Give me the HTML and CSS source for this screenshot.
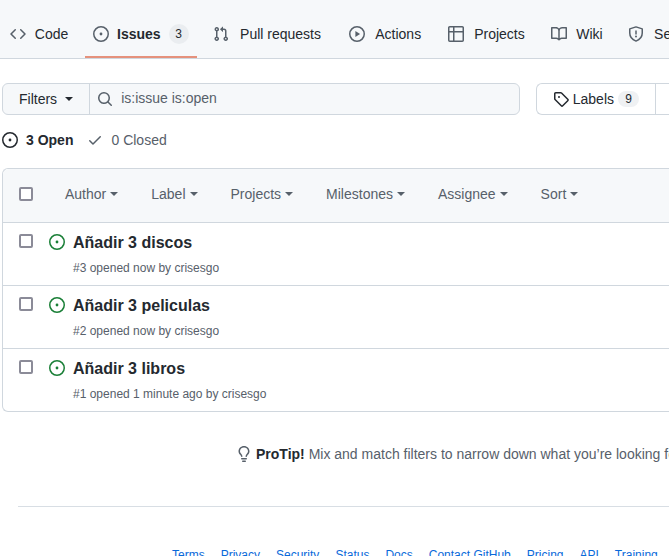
FILE: index.html
```html
<!DOCTYPE html>
<html lang="en">
<head>
<meta charset="utf-8">
<meta name="viewport" content="width=device-width, initial-scale=1">
<title>Issues</title>
<link rel="stylesheet" href="styles.css">
</head>
<body>
<svg class="sprite" aria-hidden="true">
  <symbol id="issue" viewBox="0 0 16 16"><circle cx="8" cy="8" r="7.25" fill="none" stroke="currentColor" stroke-width="1.5"/><circle cx="8" cy="8" r="1.4"/></symbol>
</svg>
<nav class="tabs" aria-label="Repository">
  <a class="tab" href="#"><svg class="icon" viewBox="0 0 16 16"><path d="m11.28 3.22 4.25 4.25a.75.75 0 0 1 0 1.06l-4.25 4.25a.749.749 0 0 1-1.275-.326.749.749 0 0 1 .215-.734L13.94 8l-3.72-3.72a.749.749 0 0 1 .326-1.275.749.749 0 0 1 .734.215Zm-6.56 0a.751.751 0 0 1 1.042.018.751.751 0 0 1 .018 1.042L2.06 8l3.72 3.72a.749.749 0 0 1-.326 1.275.749.749 0 0 1-.734-.215L.47 8.53a.75.75 0 0 1 0-1.06Z"/></svg><span class="tab-text" data-label="Code">Code</span></a>
  <a class="tab selected" href="#" aria-current="page"><svg class="icon"><use href="#issue"/></svg><span class="tab-text" data-label="Issues">Issues</span><span class="counter">3</span></a>
  <a class="tab" href="#"><svg class="icon" viewBox="0 0 16 16"><path d="M1.5 3.25a2.25 2.25 0 1 1 3 2.122v5.256a2.251 2.251 0 1 1-1.5 0V5.372A2.25 2.25 0 0 1 1.5 3.25Zm5.677-.177L9.573.677A.25.25 0 0 1 10 .854V2.5h1A2.5 2.5 0 0 1 13.5 5v5.628a2.251 2.251 0 1 1-1.5 0V5a1 1 0 0 0-1-1h-1v1.646a.25.25 0 0 1-.427.177L7.177 3.427a.25.25 0 0 1 0-.354ZM3.75 2.5a.75.75 0 1 0 0 1.5.75.75 0 0 0 0-1.5Zm0 9.5a.75.75 0 1 0 0 1.5.75.75 0 0 0 0-1.5Zm8.25.75a.75.75 0 1 0 1.5 0 .75.75 0 0 0-1.5 0Z"/></svg><span class="tab-text" data-label="Pull requests">Pull requests</span></a>
  <a class="tab" href="#"><svg class="icon" viewBox="0 0 16 16"><circle cx="8" cy="8" r="7.25" fill="none" stroke="currentColor" stroke-width="1.5"/><path d="M6.4 5.1v5.8l4.7-2.9Z"/></svg><span class="tab-text" data-label="Actions">Actions</span></a>
  <a class="tab" href="#"><svg class="icon" viewBox="0 0 16 16"><path d="M0 1.75C0 .784.784 0 1.75 0h12.5C15.216 0 16 .784 16 1.75v12.5A1.75 1.75 0 0 1 14.25 16H1.75A1.75 1.75 0 0 1 0 14.25ZM6.5 6.5v8h7.75a.25.25 0 0 0 .25-.25V6.5Zm8-1.5V1.75a.25.25 0 0 0-.25-.25H6.5V5Zm-13 1.5v7.75c0 .138.112.25.25.25H5v-8ZM5 5V1.5H1.75a.25.25 0 0 0-.25.25V5Z"/></svg><span class="tab-text" data-label="Projects">Projects</span></a>
  <a class="tab" href="#"><svg class="icon" viewBox="0 0 16 16"><path d="M0 1.75A.75.75 0 0 1 .75 1h4.253c1.227 0 2.317.59 3 1.501A3.743 3.743 0 0 1 11.006 1h4.245a.75.75 0 0 1 .75.75v10.5a.75.75 0 0 1-.75.75h-4.507a2.25 2.25 0 0 0-1.591.659l-.622.621a.75.75 0 0 1-1.06 0l-.622-.621A2.25 2.25 0 0 0 5.258 13H.75a.75.75 0 0 1-.75-.75Zm7.251 10.324.004-5.073-.002-2.253A2.25 2.25 0 0 0 5.003 2.5H1.5v9h3.757a3.75 3.75 0 0 1 1.994.574ZM8.755 4.75l-.004 7.322a3.752 3.752 0 0 1 1.992-.572H14.5v-9h-3.495a2.25 2.25 0 0 0-2.25 2.25Z"/></svg><span class="tab-text" data-label="Wiki">Wiki</span></a>
  <a class="tab" href="#"><svg class="icon" viewBox="0 0 16 16"><path d="M8 .9 14.25 2.9V7c0 3.600-1.900 6.400-6.250 8.100C3.650 13.400 1.750 10.600 1.750 7V2.900Z" fill="none" stroke="currentColor" stroke-width="1.5" stroke-linejoin="round"/><path d="M7.250 4.500h1.500v4h-1.500Z"/><circle cx="8" cy="10.500" r="1"/></svg><span class="tab-text" data-label="Security">Security</span></a>
</nav>
<main class="page">
  <div class="toolbar">
    <form class="search">
      <button class="filters" type="button">Filters<span class="caret"></span></button>
      <label class="query"><svg class="icon" viewBox="0 0 16 16"><path d="M10.680 11.740a6 6 0 0 1-7.922-8.982 6 6 0 0 1 8.982 7.922l3.040 3.040a.749.749 0 0 1-.326 1.275.749.749 0 0 1-.734-.215ZM11.500 7a4.499 4.499 0 1 0-8.997 0A4.499 4.499 0 0 0 11.500 7Z"/></svg><input type="text" aria-label="Search all issues" value="is:issue is:open"></label>
    </form>
    <div class="links">
      <a class="link-button" href="#"><svg class="icon" viewBox="0 0 16 16"><path d="M1 7.775V2.750C1 1.784 1.784 1 2.750 1h5.025c.464 0 .910.184 1.238.513l6.250 6.250a1.750 1.750 0 0 1 0 2.474l-5.026 5.026a1.750 1.750 0 0 1-2.474 0l-6.250-6.250A1.752 1.752 0 0 1 1 7.775Zm1.500 0c0 .066.026.130.073.177l6.250 6.250a.250.250 0 0 0 .354 0l5.025-5.025a.250.250 0 0 0 0-.354l-6.250-6.250a.250.250 0 0 0-.177-.073H2.750a.250.250 0 0 0-.250.250ZM6 5a1 1 0 1 1 0 2 1 1 0 0 1 0-2Z"/></svg>Labels<span class="counter">9</span></a>
      <a class="link-button" href="#" aria-label="Milestones"></a>
    </div>
  </div>
  <div class="states">
    <a class="state current" href="#"><svg class="icon"><use href="#issue"/></svg>3 Open</a>
    <a class="state" href="#"><svg class="icon" viewBox="0 0 16 16"><path d="M13.780 4.220a.750.750 0 0 1 0 1.060l-7.250 7.250a.750.750 0 0 1-1.060 0L2.220 9.280a.751.751 0 0 1 .018-1.042.751.751 0 0 1 1.042-.018L6 10.940l6.720-6.720a.750.750 0 0 1 1.060 0Z"/></svg>0 Closed</a>
  </div>
  <section class="box" aria-label="Issues">
    <header class="box-header">
      <input type="checkbox" aria-label="Select all issues">
      <div class="menus">
        <button type="button">Author<span class="caret"></span></button>
        <button type="button">Label<span class="caret"></span></button>
        <button type="button">Projects<span class="caret"></span></button>
        <button type="button">Milestones<span class="caret"></span></button>
        <button type="button">Assignee<span class="caret"></span></button>
        <button type="button">Sort<span class="caret"></span></button>
      </div>
    </header>
    <article class="issue"><input type="checkbox" aria-label="Select Añadir 3 discos"><svg class="icon open"><use href="#issue"/></svg><div><a class="title" href="#">Añadir 3 discos</a><p class="meta">#3 opened now by crisesgo</p></div></article>
    <article class="issue"><input type="checkbox" aria-label="Select Añadir 3 peliculas"><svg class="icon open"><use href="#issue"/></svg><div><a class="title" href="#">Añadir 3 peliculas</a><p class="meta">#2 opened now by crisesgo</p></div></article>
    <article class="issue"><input type="checkbox" aria-label="Select Añadir 3 libros"><svg class="icon open"><use href="#issue"/></svg><div><a class="title" href="#">Añadir 3 libros</a><p class="meta">#1 opened 1 minute ago by crisesgo</p></div></article>
  </section>
  <p class="protip"><svg class="icon" viewBox="0 0 16 16"><path d="M8 1.500c-2.363 0-4 1.690-4 3.750 0 .984.424 1.625.984 2.304l.214.253c.223.264.470.556.673.848.284.411.537.896.621 1.490a.750.750 0 0 1-1.484.211c-.040-.282-.163-.547-.370-.847a8.456 8.456 0 0 0-.542-.680c-.084-.100-.173-.205-.268-.320C3.201 7.750 2.500 6.766 2.500 5.250 2.500 2.310 4.863 0 8 0s5.500 2.310 5.500 5.250c0 1.516-.701 2.500-1.328 3.259-.095.115-.184.220-.268.319-.207.245-.383.453-.541.681-.208.300-.330.565-.370.847a.751.751 0 0 1-1.485-.212c.084-.593.337-1.078.621-1.489.203-.292.450-.584.673-.848.075-.088.147-.173.213-.253.561-.679.985-1.320.985-2.304 0-2.060-1.637-3.750-4-3.750ZM5.750 12h4.500a.750.750 0 0 1 0 1.500h-4.500a.750.750 0 0 1 0-1.500ZM6 15.250a.750.750 0 0 1 .750-.750h2.500a.750.750 0 0 1 0 1.500h-2.500a.750.750 0 0 1-.750-.750Z"/></svg><span><strong>ProTip!</strong> Mix and match filters to narrow down what you’re looking for.</span></p>
</main>
<footer class="footer">
  <a href="#">Terms</a><a href="#">Privacy</a><a href="#">Security</a><a href="#">Status</a><a href="#">Docs</a><a href="#">Contact GitHub</a><a href="#">Pricing</a><a href="#">API</a><a href="#">Training</a>
</footer>
</body>
</html>
```
FILE: styles.css
```css
* { box-sizing: border-box; }
html { height: 100%; overflow: hidden; }
body {
  height: 100%;
  margin: 0;
  overflow: hidden;
  background: #fff;
  color: #24292f;
  font: 14px/20px "Liberation Sans", Arial, sans-serif;
}
a { color: inherit; text-decoration: none; }
button, input { font: inherit; color: inherit; margin: 0; }
p { margin: 0; }
.sprite { display: none; }
.icon { width: 16px; height: 16px; flex: none; fill: currentColor; }
.caret {
  border: 4px solid transparent;
  border-top-color: currentColor;
  border-bottom-width: 0;
}
.counter {
  min-width: 20px;
  padding: 0 6px;
  border-radius: 20px;
  background: #eaedf0;
  font-size: 12px;
  font-weight: 400;
  line-height: 20px;
  text-align: center;
}

.tabs {
  display: flex;
  gap: 8px;
  padding: 10px 0 0 2px;
  overflow: hidden;
  background: #f6f8fa;
  border-bottom: 1px solid #d0d7de;
}
.tab {
  display: flex;
  flex: none;
  align-items: center;
  gap: 8px;
  height: 48px;
  padding: 2px 8px 0;
  border-bottom: 2px solid transparent;
}
.tab .icon { color: #57606a; }
.tab-text { text-align: center; }
.tab-text::after {
  content: attr(data-label);
  display: block;
  height: 0;
  overflow: hidden;
  visibility: hidden;
  font-weight: 700;
}
.selected { border-bottom-color: #e5917c; font-weight: 700; }

.page { padding: 24px 0 0 2px; }
.toolbar { display: flex; gap: 16px; }
.search {
  display: flex;
  flex: 1;
  height: 32px;
  border: 1px solid #d0d7de;
  border-radius: 6px;
  background: #f6f8fa;
}
.filters {
  display: flex;
  align-items: center;
  gap: 8px;
  padding: 0 16px 1px;
  border: 0;
  border-right: 1px solid #d0d7de;
  background: none;
}
.query {
  display: flex;
  flex: 1;
  align-items: center;
  gap: 8px;
  padding: 0 7px;
  color: #57606a;
}
.query input {
  flex: 1;
  min-width: 0;
  padding: 0 0 2px;
  border: 0;
  background: none;
  outline: 0;
}
.links {
  display: flex;
  border: 1px solid #d0d7de;
  border-right: 0;
  border-radius: 6px 0 0 6px;
}
.link-button {
  display: flex;
  align-items: center;
  gap: 4px;
  padding: 0 16px;
}
.link-button + .link-button { padding: 0 0 0 13px; border-left: 1px solid #d0d7de; }
.link-button .counter { min-width: 21px; line-height: 16px; background: #eff1f3; }

.states { display: flex; gap: 14px; padding: 15px 0 18px; }
.state { display: flex; align-items: center; gap: 8px; color: #57606a; }
.current { color: #24292f; font-weight: 700; }

.box {
  border: 1px solid #d0d7de;
  border-right: 0;
  border-radius: 6px 0 0 6px;
}
.box input {
  appearance: none;
  flex: none;
  width: 14px;
  height: 14px;
  border: 2px solid #8b8b98;
  border-radius: 2px;
  background: #fff;
}
.box-header {
  display: flex;
  align-items: center;
  height: 53px;
  padding: 0 16px 3px;
  border-radius: 6px 0 0 0;
  background: #f6f8fa;
}
.menus { display: flex; gap: 33px; padding-left: 32px; }
.menus button {
  display: flex;
  align-items: center;
  gap: 4px;
  padding: 0;
  border: 0;
  background: none;
  color: #57606a;
}
.issue {
  display: flex;
  height: 63px;
  padding: 8px 16px;
  border-top: 1px solid #d0d7de;
}
.issue input { margin: 3px 16px 0 0; }
.open { margin: 3px 8px 0 0; color: #1a7f37; }
.title { display: block; font-size: 16px; font-weight: 700; line-height: 24px; }
.meta { padding-top: 4px; color: #57606a; font-size: 12px; line-height: 18px; }

.protip {
  display: flex;
  align-items: center;
  gap: 4px;
  padding: 32px 0 0 234px;
  white-space: nowrap;
  color: #57606a;
}
.protip strong { color: #24292f; }

.footer {
  display: flex;
  gap: 16px;
  margin: 42px 0 0 18px;
  padding: 39px 0 0 154px;
  border-top: 1px solid #d8dee4;
  white-space: nowrap;
  color: #0969da;
  font-size: 12px;
  line-height: 18px;
}
```
